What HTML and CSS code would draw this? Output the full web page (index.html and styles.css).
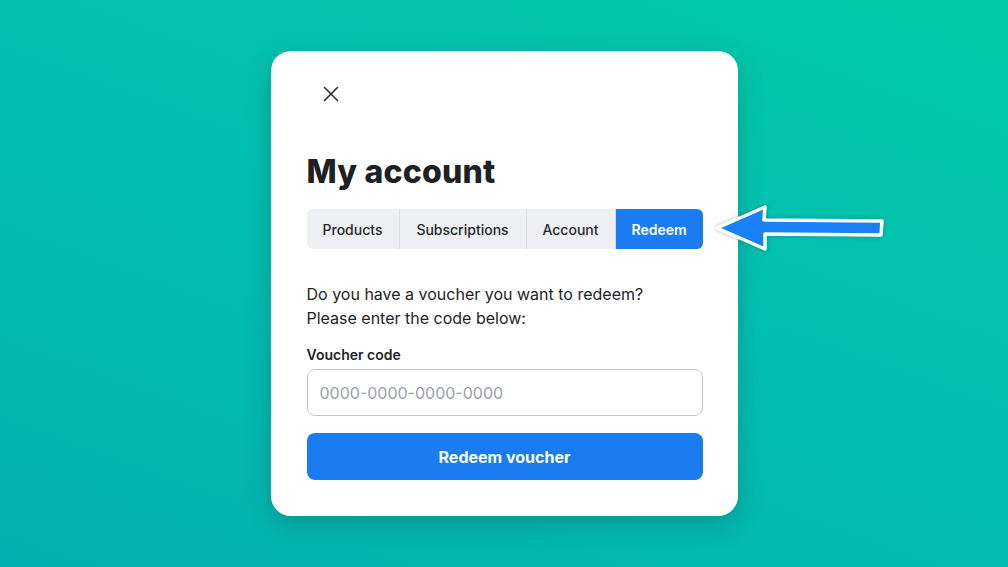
FILE: index.html
```html
<!DOCTYPE html>
<html lang="en">
<head>
    <meta charset="UTF-8">
    <meta name="viewport" content="width=device-width, initial-scale=1.0">
    <title>My account</title>
    <link rel="stylesheet" href="styles.css">
</head>
<body>
    <div class="dialog">
        <button class="close-btn" aria-label="Close">
            <svg width="16" height="16" viewBox="0 0 16 16">
                <path d="M1.5 1.5 L14.5 14.5 M14.5 1.5 L1.5 14.5" stroke="#2a2d33" stroke-width="1.6" stroke-linecap="round" fill="none"/>
            </svg>
        </button>

        <h1>My account</h1>

        <div class="tabs">
            <div class="tab">Products</div>
            <div class="tab">Subscriptions</div>
            <div class="tab">Account</div>
            <div class="tab active">Redeem</div>
        </div>

        <p class="intro">Do you have a voucher you want to redeem?<br>Please enter the code below:</p>

        <label for="code" class="field-label">Voucher code</label>
        <input type="text" id="code" class="code-input" placeholder="0000-0000-0000-0000">

        <button class="redeem-btn">Redeem voucher</button>

        <!-- callout arrow pointing at the active tab -->
        <svg class="pointer" width="184" height="56" viewBox="0 0 184 56">
            <path d="M5 25 L53 4 L52 17 L170 18 L169 32 L53 31 L53 46 Z"
                  fill="#1a80f6" stroke="#ffffff" stroke-width="3.5" stroke-linejoin="round"/>
        </svg>
    </div>
</body>
</html>
```

FILE: styles.css
```css
* {
    box-sizing: border-box;
}
html, body {
    height: 100%;
}
body {
    margin: 0;
    font-family: Inter, "Noto Sans", Arial, sans-serif;
    color: #1f2328;
    background: linear-gradient(200deg, #00caa9 0%, #03bcb0 55%, #03b2b0 100%);
    display: flex;
    align-items: center;
    justify-content: center;
}
.dialog {
    position: relative;
    width: 467px;
    background: #fff;
    border-radius: 20px;
    padding: 19px 35px 36px 36px;
    box-shadow: 0 8px 24px rgba(0, 60, 60, 0.25);
    display: flex;
    flex-direction: column;
}
.close-btn {
    width: 48px;
    height: 48px;
    border: none;
    background: none;
    padding: 0;
    cursor: pointer;
    display: flex;
    align-items: center;
    justify-content: center;
}
h1 {
    margin: 34px 0 0;
    font-size: 32px;
    line-height: 40px;
    font-weight: 800;
    letter-spacing: 0.2px;
    color: #1e2024;
}
.tabs {
    margin-top: 17px;
    display: flex;
    height: 40px;
    border-radius: 6px;
    overflow: hidden;
    background: #eef0f3;
}
.tab {
    display: flex;
    align-items: center;
    justify-content: center;
    font-size: 14px;
    font-weight: 500;
    color: #26292e;
    border-right: 1px solid #dadde3;
}
.tab:nth-child(1) { width: 93px; }
.tab:nth-child(2) { width: 127px; }
.tab:nth-child(3) { width: 89px; }
.tab.active {
    flex: 1;
    border-right: none;
    background: #1a7cf0;
    color: #fff;
    font-weight: 600;
}
.intro {
    margin: 33px 0 0;
    font-size: 16px;
    line-height: 24px;
}
.field-label {
    margin-top: 15px;
    font-size: 14px;
    line-height: 20px;
    font-weight: 600;
}
.code-input {
    margin-top: 4px;
    height: 47px;
    border: 1px solid #c3c7ce;
    border-radius: 8px;
    padding: 0 12px;
    font-family: inherit;
    font-size: 16px;
    color: #1f2328;
}
.code-input::placeholder {
    color: #9ba1a9;
}
.redeem-btn {
    margin-top: 17px;
    height: 47px;
    border: none;
    border-radius: 8px;
    background: #1a7cf0;
    color: #fff;
    font-family: inherit;
    font-size: 16px;
    font-weight: 700;
    cursor: pointer;
}
.pointer {
    position: absolute;
    left: 441px;
    top: 152px;
    filter: drop-shadow(0 0 2px rgba(0, 40, 60, 0.3));
}
```
